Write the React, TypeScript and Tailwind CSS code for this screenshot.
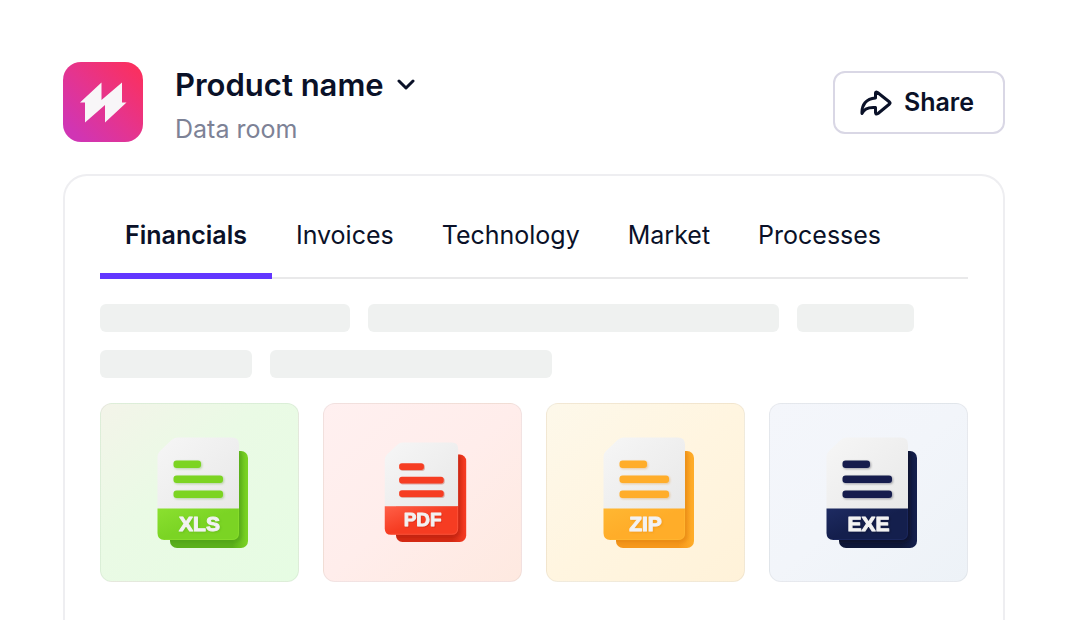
interface FileColors {
  light: string;
  base: string;
  dark: string;
  shadow: string;
}

interface FileCardProps {
  label: string;
  background: string;
  size: string;
  colors: FileColors;
}

const tabs = ["Invoices", "Technology", "Market", "Processes"];

const files: FileCardProps[] = [
  {
    label: "XLS",
    background: "from-[#f3f4e9] via-[#eafae5] via-40% to-[#e6fce3]",
    size: "w-[100px]",
    colors: { light: "#8be02f", base: "#7bd424", dark: "#5bb01c", shadow: "#4a9a18" },
  },
  {
    label: "PDF",
    background: "from-[#fff0f0] via-[#ffedeb] to-[#fee9e0]",
    size: "w-[90px]",
    colors: { light: "#ff6048", base: "#f63c22", dark: "#d42a14", shadow: "#b01c0c" },
  },
  {
    label: "ZIP",
    background: "from-[#fdf8ea] via-[#fff5e0] to-[#fff2d9]",
    size: "w-[100px]",
    colors: { light: "#ffb732", base: "#ffad29", dark: "#f6981c", shadow: "#de7f10" },
  },
  {
    label: "EXE",
    background: "from-[#f4f6fb] via-[#f2f5fa] to-[#edf2f7]",
    size: "w-[100px]",
    colors: { light: "#1e2b62", base: "#141f4d", dark: "#0e1738", shadow: "#070c20" },
  },
];

const Logo = () => {
  return (
    <svg viewBox="0 0 80 80" className="size-20 shrink-0" aria-hidden="true">
      <defs>
        <linearGradient id="logo" x1="0" y1="1" x2="1" y2="0">
          <stop offset="0.12" stopColor="#d035b4" />
          <stop offset="0.5" stopColor="#e5348e" />
          <stop offset="0.92" stopColor="#fa3060" />
        </linearGradient>
      </defs>
      <rect width="80" height="80" rx="18" fill="url(#logo)" />
      <path
        d="M17 40.5 38.5 20.5V38L59 20.5V40.5H63.5L42 60.5V43L22 60.5V40.5Z"
        fill="#f8f6f8"
      />
    </svg>
  );
};

const ShareIcon = () => {
  return (
    <svg
      viewBox="0 0 32 28"
      className="w-8 shrink-0"
      fill="none"
      stroke="currentColor"
      strokeWidth="3"
      strokeLinecap="round"
      strokeLinejoin="round"
      aria-hidden="true"
    >
      <path d="M15.5 9V4Q15.5 2.500 17.500 3.500L29.500 13Q30.500 14 29.500 15L18 24.500Q15.500 26 15.500 23.500V18.500C9 18 4 19.500 2 24.500C1.500 16 6 9.500 15.500 9Z" />
    </svg>
  );
};

const FileIcon = ({ label, colors }: { label: string; colors: FileColors }) => {
  return (
    <svg viewBox="0 0 100 112" className="w-full overflow-visible">
      <defs>
        <linearGradient id={`paper-${label}`} x1="0" y1="0" x2="1" y2="1">
          <stop offset="0" stopColor="#f6f6f6" />
          <stop offset="1" stopColor="#e8e8e8" />
        </linearGradient>
        <linearGradient id={`band-${label}`} x1="0" y1="0" x2="1" y2="1">
          <stop offset="0" stopColor={colors.light} />
          <stop offset="0.5" stopColor={colors.base} />
          <stop offset="1" stopColor={colors.base} />
        </linearGradient>
        <linearGradient id={`back-${label}`} x1="0" y1="0" x2="1" y2="0">
          <stop offset="0.8" stopColor={colors.dark} />
          <stop offset="1" stopColor={colors.base} />
        </linearGradient>
        <filter id={`blur-${label}`} x="-20%" y="-20%" width="140%" height="140%">
          <feGaussianBlur stdDeviation="1.5" />
        </filter>
        <filter id={`drop-${label}`} x="-20%" y="-20%" width="140%" height="160%">
          <feDropShadow dx="1" dy="1" stdDeviation="0.8" floodColor={colors.shadow} floodOpacity="0.35" />
        </filter>
        <clipPath id={`clip-${label}`}>
          <rect x="20" y="14" width="78" height="97" rx="7" />
        </clipPath>
      </defs>
      <rect x="20" y="14" width="78" height="97" rx="7" fill={`url(#back-${label})`} />
      <g clipPath={`url(#clip-${label})`}>
        <rect
          x="10"
          y="12"
          width="82"
          height="94"
          rx="7"
          fill={colors.shadow}
          opacity="0.45"
          filter={`url(#blur-${label})`}
        />
      </g>
      <path
        d="M7.500 20Q7.500 16.500 10 14L21.500 3Q24 0.500 27.500 0.500H82Q89 0.500 89 7.500V72H7.500Z"
        fill={`url(#paper-${label})`}
      />
      <path
        d="M7.500 71.500H89V96Q89 103 82 103H14.500Q7.500 103 7.500 96Z"
        fill={`url(#band-${label})`}
      />
      <path
        d="M88.500 72V96Q88.500 102.500 82 102.500H14.500"
        fill="none"
        stroke={colors.light}
        strokeOpacity="0.7"
      />
      <g fill={colors.base} filter={`url(#drop-${label})`}>
        <rect x="23.500" y="23.500" width="27.500" height="7.500" rx="3" />
        <rect x="23.500" y="38.500" width="49.500" height="7.500" rx="3" />
        <rect x="23.500" y="53.500" width="49.500" height="7.500" rx="3" />
      </g>
      <text
        x="49.500"
        y="93.500"
        textAnchor="middle"
        fill="#f2f2f2"
        stroke="#f2f2f2"
        strokeWidth="1"
        strokeLinejoin="round"
        filter={`url(#drop-${label})`}
        className="font-['Liberation_Sans',sans-serif] text-[21px] font-bold"
      >
        {label}
      </text>
    </svg>
  );
};

const FileCard = ({ label, background, size, colors }: FileCardProps) => {
  return (
    <div
      className={`flex h-[179px] items-center justify-center rounded-xl border border-black/5 bg-linear-to-br ${background}`}
    >
      <div className={size}>
        <FileIcon label={label} colors={colors} />
      </div>
    </div>
  );
};

const App = () => {
  return (
    <div className="flex h-screen flex-col overflow-hidden bg-white pt-[62px] pr-[61px] pl-[63px] font-['Inter',sans-serif] text-[#0a1128]">
      <header className="flex shrink-0 items-start justify-between">
        <div className="flex gap-8">
          <Logo />
          <div className="flex flex-col">
            <button type="button" className="flex items-center gap-3">
              <h1 className="text-[31px] leading-[46px] font-semibold">Product name</h1>
              <svg
                viewBox="0 0 20 12"
                className="w-5"
                fill="none"
                stroke="currentColor"
                strokeWidth="3"
                strokeLinecap="round"
                strokeLinejoin="round"
                aria-hidden="true"
              >
                <path d="M3 2l7 7 7-7" />
              </svg>
            </button>
            <p className="text-[25px] leading-[42px] text-[#7d8296]">Data room</p>
          </div>
        </div>
        <button
          type="button"
          className="mt-[9px] flex h-[63px] items-center gap-3 rounded-xl border-2 border-[#d9d7e5] pr-[29px] pl-[25px] text-[25px] font-semibold"
        >
          <ShareIcon />
          Share
        </button>
      </header>

      <main className="mt-6 flex-1 rounded-t-3xl border-2 border-b-0 border-[#eeeef1] px-[35px] pt-9">
        <nav className="flex border-b-2 border-[#e9e9ea]" role="tablist">
          <button
            type="button"
            role="tab"
            aria-selected="true"
            className="-mb-[2px] h-[67px] border-b-6 border-[#6236ff] px-[25px] pb-[14px] text-[25px] font-semibold"
          >
            Financials
          </button>
          {tabs.map((tab) => (
            <button
              key={tab}
              type="button"
              role="tab"
              aria-selected="false"
              className="h-[65px] px-6 pb-[18px] text-[25px]"
            >
              {tab}
            </button>
          ))}
        </nav>

        <div className="mt-[25px] flex flex-col gap-[18px]">
          <div className="flex gap-[18px]">
            <div className="h-7 w-[250px] rounded-md bg-[#eff1f0]" />
            <div className="h-7 w-[411px] rounded-md bg-[#eff1f0]" />
            <div className="h-7 w-[117px] rounded-md bg-[#eff1f0]" />
          </div>
          <div className="flex gap-[18px]">
            <div className="h-7 w-[152px] rounded-md bg-[#eff1f0]" />
            <div className="h-7 w-[282px] rounded-md bg-[#eff1f0]" />
          </div>
        </div>

        <div className="mt-[25px] grid grid-cols-4 gap-6">
          {files.map((file) => (
            <FileCard key={file.label} {...file} />
          ))}
        </div>
      </main>
    </div>
  );
};

export default App;
